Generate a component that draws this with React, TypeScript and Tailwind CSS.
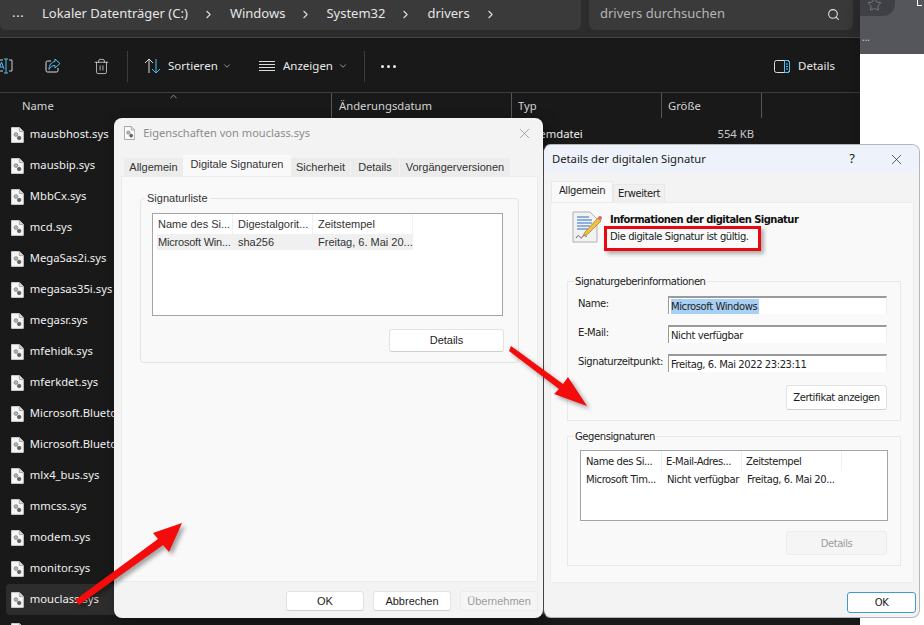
import { ChevronDown, ChevronRight, ChevronUp, Search, Star, Trash2, X } from "lucide-react";

const files = [
  "mausbhost.sys",
  "mausbip.sys",
  "MbbCx.sys",
  "mcd.sys",
  "MegaSas2i.sys",
  "megasas35i.sys",
  "megasr.sys",
  "mfehidk.sys",
  "mferkdet.sys",
  "Microsoft.Bluetooth.Legacy.sys",
  "Microsoft.Bluetooth.Audio.sys",
  "mlx4_bus.sys",
  "mmcss.sys",
  "modem.sys",
  "monitor.sys",
  "mouclass.sys",
];

function SysFile({ size = 16, dim = false }: { size?: number; dim?: boolean }) {
  return (
    <svg width={size * 0.8} height={size} viewBox="0 0 13 16" className="shrink-0">
      <path d="M.5.5h8l4 4v11H.5z" fill={dim ? "#fafafa" : "#f6f6f6"} stroke={dim ? "#9a9a9a" : "#d0d0d0"} />
      <path d="M8.5.5v4h4" fill="#d8d8d8" stroke="#a8a8a8" />
      <circle cx="5" cy="7.5" r="1.9" fill="#b5b5b5" stroke="#777" strokeWidth=".7" />
      <circle cx="8.3" cy="11" r="1.8" fill="#666" stroke="#444" strokeWidth=".6" />
    </svg>
  );
}

function Explorer() {
  return (
    <div className="w-[860px] h-[625px] bg-[#191919] overflow-hidden font-['Noto_Sans',sans-serif] flex flex-col">
      <div className="h-[38px] bg-[#2c2c2c] border-b border-[#454545] flex gap-2 shrink-0">
        <div className="w-[581px] h-[30px] bg-[#3a3a3a] rounded-b-md flex items-center pl-[12px] pb-[2px] text-[13px] text-[#e6e6e6]">
          <span className="w-[30px] tracking-wider leading-none -mt-1">...</span>
          <span>Lokaler Datenträger (C:)</span>
          <ChevronRight size={13} className="text-[#ddd] ml-[14px] mr-[15px]" />
          <span>Windows</span>
          <ChevronRight size={13} className="text-[#ddd] ml-[14px] mr-[14px]" />
          <span>System32</span>
          <ChevronRight size={13} className="text-[#ddd] ml-[14px] mr-[15px]" />
          <span>drivers</span>
          <ChevronRight size={13} className="text-[#ddd] ml-[14px]" />
        </div>
        <div className="w-[264px] h-[30px] bg-[#3a3a3a] rounded-b-md flex items-center justify-between pl-[11px] pr-[13px] pb-[2px]">
          <span className="text-[13px] text-[#b5b5b5]">drivers durchsuchen</span>
          <Search size={13} className="text-[#e0e0e0]" />
        </div>
      </div>

      <div className="h-[55px] border-b border-[#3d3d3d] flex items-center shrink-0 pt-[2px]">
        <svg width="14" height="16" viewBox="0 0 14 16" className="ml-[-1px]" fill="none">
          <path d="M0 2h4M0 13h4M10 2h3v11h-3" stroke="#ccc" />
          <path d="M7 1v14M5 1h4M5 15h4" stroke="#4fc1f5" />
          <path d="M0 11l2.500-7L5 11M1 9h3" stroke="#4fc1f5" />
        </svg>
        <svg width="16" height="16" viewBox="0 0 16 16" className="ml-[32px]" fill="none">
          <path d="M6 3H2.500A1.500 1.500 0 0 0 1 4.500v8A1.500 1.500 0 0 0 2.500 14h9a1.500 1.500 0 0 0 1.500-1.500V10" stroke="#ddd" />
          <path d="M10 1l5 4.500-5 4.500V7.500C7 7.500 5 9 4 11.500 4 7 6.500 4 10 3.500z" stroke="#4fc1f5" />
        </svg>
        <Trash2 size={17} strokeWidth={1.1} className="text-[#ddd] ml-[32px]" />
        <div className="w-px h-[31px] bg-[#3d3d3d] ml-[17px]" />
        <svg width="17" height="16" viewBox="0 0 17 16" className="ml-[16px]" fill="none">
          <path d="M5 15V1M1 5l4-4 4 4" stroke="#ddd" />
          <path d="M12 1v14M8 11l4 4 4-4" stroke="#4fc1f5" />
        </svg>
        <span className="text-[11.5px] text-[#e8e8e8] ml-[7px] w-[49px]">Sortieren</span>
        <ChevronDown size={10} className="text-[#aaa] ml-[5px]" />
        <svg width="16" height="12" viewBox="0 0 16 12" className="ml-[27px]" fill="none" stroke="#ddd">
          <path d="M0 1.500h16M0 4.500h16M0 7.500h16M0 10.500h16" />
        </svg>
        <span className="text-[11.5px] text-[#e8e8e8] ml-[8px] w-[50px]">Anzeigen</span>
        <ChevronDown size={10} className="text-[#aaa] ml-[5px]" />
        <div className="w-px h-[31px] bg-[#3d3d3d] ml-[16px]" />
        <div className="flex gap-[3px] ml-[16px]">
          <span className="w-[3px] h-[3px] rounded-full bg-[#eee]" />
          <span className="w-[3px] h-[3px] rounded-full bg-[#eee]" />
          <span className="w-[3px] h-[3px] rounded-full bg-[#eee]" />
        </div>
        <svg width="16" height="13" viewBox="0 0 16 13" className="ml-auto" fill="none">
          <rect x=".5" y=".5" width="15" height="12" rx="2" stroke="#ddd" />
          <path d="M10.500.5h3a2 2 0 0 1 2 2v8a2 2 0 0 1-2 2h-3z" stroke="#4fc1f5" />
          <path d="M12 4h2M12 6.500h2M12 9h2" stroke="#4fc1f5" />
        </svg>
        <span className="text-[11.5px] text-[#e8e8e8] ml-[8px] mr-[25px]">Details</span>
      </div>

      <div className="h-[25px] flex text-[11.25px] text-[#d4d4d4] shrink-0 leading-[25px]">
        <div className="w-[331px] pl-[22px] relative">
          Name
          <ChevronUp size={11} className="absolute left-[168px] -top-[2px] text-[#999]" />
        </div>
        <div className="w-[180px] pl-[7px] border-l border-[#555]">Änderungsdatum</div>
        <div className="w-[150px] pl-[6px] border-l border-[#555]">Typ</div>
        <div className="w-[100px] pl-[6px] border-l border-[#555]">Größe</div>
        <div className="border-l border-[#555]" />
      </div>

      <div className="flex flex-col mt-px">
        {files.map((f, i) => (
          <div
            key={f}
            className={
              i === 15
                ? "h-[31px] flex items-center shrink-0 text-[11.25px] text-[#f0f0f0] ml-[6px] pl-[5px] bg-[#2d2d2d] rounded-sm"
                : "h-[31px] flex items-center shrink-0 text-[11.25px] text-[#f0f0f0] ml-[6px] pl-[5px]"
            }
          >
            <div className="w-[320px] flex items-center gap-[6px] whitespace-nowrap">
              <SysFile />
              {f}
            </div>
            {i === 0 && (
              <>
                <div className="w-[187px] ml-[180px] pl-[7px]">Systemdatei</div>
                <div className="w-[56px] text-right text-[#c8c8c8]">554 KB</div>
              </>
            )}
          </div>
        ))}
        <div className="h-[31px] flex items-center shrink-0 pl-[11px]">
          <SysFile />
        </div>
      </div>
    </div>
  );
}

function Btn({ label, className, disabled, primary }: { label: string; className: string; disabled?: boolean; primary?: boolean }) {
  return (
    <div
      className={
        className +
        (primary
          ? " flex items-center justify-center rounded-[3px] bg-white border border-[#3f9ad8] text-[#1c1c1c]"
          : disabled
          ? " flex items-center justify-center rounded-[3px] bg-[#f5f5f5] border border-[#ececec] text-[#9c9c9c]"
          : " flex items-center justify-center rounded-[3px] bg-white border border-[#e2e2e2] border-b-[#cfcfcf] text-[#1c1c1c]")
      }
    >
      {label}
    </div>
  );
}

function EigenschaftenDialog() {
  return (
    <div className="absolute left-[114px] top-[118px] w-[429px] h-[500px] bg-[#f3f3f3] rounded-lg shadow-[4px_4px_14px_rgba(0,0,0,0.35)] flex flex-col font-['Liberation_Sans',sans-serif] text-[11px] text-[#333]">
      <div className="h-[30px] flex items-center pl-[10px] pr-[10px] shrink-0 font-['Noto_Sans',sans-serif]">
        <SysFile size={14} dim />
        <span className="ml-[8px] text-[11.1px] text-[#8c8c8c]">Eigenschaften von mouclass.sys</span>
        <X size={17} strokeWidth={1} className="ml-auto text-[#888]" />
      </div>
      <div className="h-[28px] flex items-end pl-[10px] shrink-0">
        <div className="w-[59px] h-[18px] flex items-center justify-center bg-[#ececec]">Allgemein</div>
        <div className="w-[108px] h-[21px] pb-[3px] flex items-center justify-center bg-[#f9f9f9]">Digitale Signaturen</div>
        <div className="w-[59px] h-[18px] flex items-center justify-center bg-[#ececec]">Sicherheit</div>
        <div className="w-[48px] h-[18px] ml-px flex items-center justify-center bg-[#ececec]">Details</div>
        <div className="w-[110px] h-[18px] ml-px flex items-center justify-center bg-[#ececec]">Vorgängerversionen</div>
      </div>
      <div className="h-[406px] ml-[7px] mr-[5px] bg-[#f9f9f9] border border-[#ececec] pt-[21px] px-[18px] shrink-0">
        <div className="relative h-[165px] border border-[#e4e4e4] rounded-sm pl-[11px] pr-[15px] pt-[14px] flex flex-col">
          <span className="absolute left-[4px] -top-[7px] bg-[#f9f9f9] px-[2px] leading-[13px]">Signaturliste</span>
          <div className="h-[103px] bg-white border border-[#a3a3a9] pl-[4px] shrink-0">
            <div className="flex h-[20px] items-center text-[#333]">
              <div className="w-[76px] pl-[1px] h-full flex items-center border-r border-[#f0f0f0]">Name des Si...</div>
              <div className="w-[80px] pl-[5px] h-full flex items-center border-r border-[#f0f0f0]">Digestalgorit...</div>
              <div className="w-[100px] pl-[5px] h-full flex items-center border-r border-[#f0f0f0]">Zeitstempel</div>
            </div>
            <div className="flex h-[16px] w-[256px] items-center bg-[#f0f0f0]">
              <div className="w-[76px] pl-[1px] tracking-[-0.2px] whitespace-nowrap">Microsoft Win...</div>
              <div className="w-[80px] pl-[5px]">sha256</div>
              <div className="w-[100px] pl-[5px] whitespace-nowrap">Freitag, 6. Mai 20...</div>
            </div>
          </div>
          <div className="flex justify-end mt-[13px] -mr-px">
            <Btn label="Details" className="w-[115px] h-[23px]" />
          </div>
        </div>
      </div>
      <div className="flex gap-[9px] pl-[172px] pt-[9px]">
        <Btn label="OK" className="w-[78px] h-[20px]" />
        <Btn label="Abbrechen" className="w-[78px] h-[20px]" />
        <Btn label="Übernehmen" className="w-[78px] h-[20px]" disabled />
      </div>
    </div>
  );
}

function SigField({ label, value, selected }: { label: string; value: string; selected?: boolean }) {
  return (
    <div className="flex h-[18px] mb-[11px]">
      <span className="w-[90px] pt-[1px] leading-[13px] whitespace-nowrap">{label}</span>
      <div className="w-[219px] h-[18px] bg-white border-t-2 border-l border-r border-t-[#9a9a9a] border-l-[#9a9a9a] border-r-[#eee] flex items-center pl-[2px]">
        <span className={selected ? "bg-[#a8d0f4] pr-[2px]" : ""}>{value}</span>
      </div>
    </div>
  );
}

function CertIcon() {
  return (
    <svg width="31" height="32" viewBox="0 0 31 32" className="shrink-0">
      <path d="M1 1h17l7 7v23H1z" fill="#f2f2f2" stroke="#b0b0b0" />
      <path d="M5 6h12M5 9h15M5 12h15M5 15h13M5 18h11" stroke="#6d9bd6" strokeWidth="1.300" />
      <path d="M4 27c2-3 3-3 4-1s2 1 3-1 2 1 4 0" stroke="#555" fill="none" />
      <path d="M11 25l2-4L26 7l3 3-13 13z" fill="#f0c040" stroke="#a07820" strokeWidth=".7" />
      <circle cx="28" cy="7" r="2" fill="#d86a6a" />
    </svg>
  );
}

function DetailsDialog() {
  return (
    <div className="absolute left-[543px] top-[144px] w-[377px] h-[474px] bg-[#f3f3f3] rounded-lg border border-[#b5b5b5] border-l-[#444] flex flex-col font-['DejaVu_Sans',sans-serif] text-[10px] tracking-[-0.42px] text-[#222] overflow-hidden">
      <div className="h-[28px] bg-[#eef2fb] flex items-center pl-[8px] shrink-0 tracking-normal">
        <span className="text-[11.25px] text-[#1a1a1a] font-['Noto_Sans',sans-serif]">Details der digitalen Signatur</span>
        <span className="ml-auto text-[13px] font-['Noto_Sans',sans-serif]">?</span>
        <X size={17} strokeWidth={1} className="ml-[33px] mr-[14px] text-[#222]" />
      </div>
      <div className="h-[29px] flex items-end pl-[7px] shrink-0">
        <div className="w-[62px] h-[21px] pb-[3px] flex items-center justify-center bg-[#f9f9f9] border border-b-0 border-[#e8e8e8]">Allgemein</div>
        <div className="w-[52px] h-[18px] flex items-center justify-center bg-[#f0f0f0] border border-b-0 border-[#e8e8e8]">Erweitert</div>
      </div>
      <div className="h-[381px] ml-[6px] mr-[5px] bg-[#f9f9f9] border border-[#ececec] pl-[16px] pr-[12px] shrink-0">
        <div className="flex h-[78px] pt-[8px] pl-[5px]">
          <CertIcon />
          <div className="ml-[7px] flex flex-col pt-[2px] leading-[13px]">
            <span className="font-bold tracking-[-0.55px] text-[#111]">Informationen der digitalen Signatur</span>
            <span className="mt-[4px]">Die digitale Signatur ist gültig.</span>
          </div>
        </div>
        <div className="relative h-[140px] border border-[#e8e8e8] pl-[10px] pr-[13px] pt-[14px]">
          <span className="absolute left-[6px] -top-[7px] bg-[#f9f9f9] px-[1px] leading-[13px]">Signaturgeberinformationen</span>
          <SigField label="Name:" value="Microsoft Windows" selected />
          <SigField label="E-Mail:" value="Nicht verfügbar" />
          <SigField label="Signaturzeitpunkt:" value="Freitag, 6. Mai 2022 23:23:11" />
          <div className="flex justify-end mt-[13px]">
            <Btn label="Zertifikat anzeigen" className="w-[101px] h-[25px]" />
          </div>
        </div>
        <div className="relative h-[130px] mt-[15px] border border-[#e8e8e8] pl-[12px] pr-[12px] pt-[13px]">
          <span className="absolute left-[6px] -top-[7px] bg-[#f9f9f9] px-[1px] leading-[13px]">Gegensignaturen</span>
          <div className="h-[71px] bg-white border border-[#a3a3a9] pl-[5px]">
            <div className="flex h-[20px] items-center">
              <div className="w-[76px] h-full flex items-center border-r border-[#f0f0f0]">Name des Si...</div>
              <div className="w-[80px] pl-[4px] h-full flex items-center border-r border-[#f0f0f0]">E-Mail-Adres...</div>
              <div className="w-[100px] pl-[4px] h-full flex items-center border-r border-[#f0f0f0]">Zeitstempel</div>
            </div>
            <div className="flex h-[16px] items-center whitespace-nowrap">
              <div className="w-[76px]">Microsoft Tim...</div>
              <div className="w-[80px] pl-[5px]">Nicht verfügbar</div>
              <div className="w-[100px] pl-[5px]">Freitag, 6. Mai 20...</div>
            </div>
          </div>
          <div className="flex justify-end mt-[10px] mr-px">
            <Btn label="Details" className="w-[101px] h-[24px]" disabled />
          </div>
        </div>
      </div>
      <div className="flex justify-end pr-[3px] pt-[9px]">
        <Btn label="OK" className="w-[69px] h-[21px]" primary />
      </div>
    </div>
  );
}

function Arrow({ points }: { points: string }) {
  return (
    <polygon points={points} fill="#f40b0b" style={{ filter: "drop-shadow(3px 3px 2px rgba(0,0,0,0.35))" }} />
  );
}

export default function App() {
  return (
    <div className="relative w-[924px] h-[625px] overflow-hidden bg-white flex">
      <Explorer />
      <div className="flex-1 flex flex-col shadow-[-8px_0_14px_rgba(0,0,0,0.12)]">
        <div className="h-[54px] bg-[#55565b] relative">
          <div className="w-[35px] h-[16px] bg-[#3f4045] rounded-br-xl flex justify-center items-start">
            <Star size={15} strokeWidth={1} className="text-[#9a9a9a] -mt-[3px] -ml-[7px]" />
          </div>
          <div className="absolute left-[57px] top-0 w-[5px] h-[6px] border-l border-b border-white" />
          <div className="absolute left-[2px] top-[32px] text-[10px] leading-none text-[#ccc]">...</div>
        </div>
      </div>
      <EigenschaftenDialog />
      <DetailsDialog />

      <div className="absolute left-[604px] top-[226px] w-[157px] h-[25px] border-[3px] border-[#e8080f] shadow-[3px_3px_4px_rgba(0,0,0,0.3)]" />

      <svg className="absolute left-0 top-0 pointer-events-none" width="924" height="625" viewBox="0 0 924 625">
        <Arrow points="75,600 158,539 153,533 182,523 169,552 163,545 79,605" />
        <Arrow points="509,351 511,346 563,384 568,377 587,406 554,394 559,389" />
      </svg>
    </div>
  );
}
